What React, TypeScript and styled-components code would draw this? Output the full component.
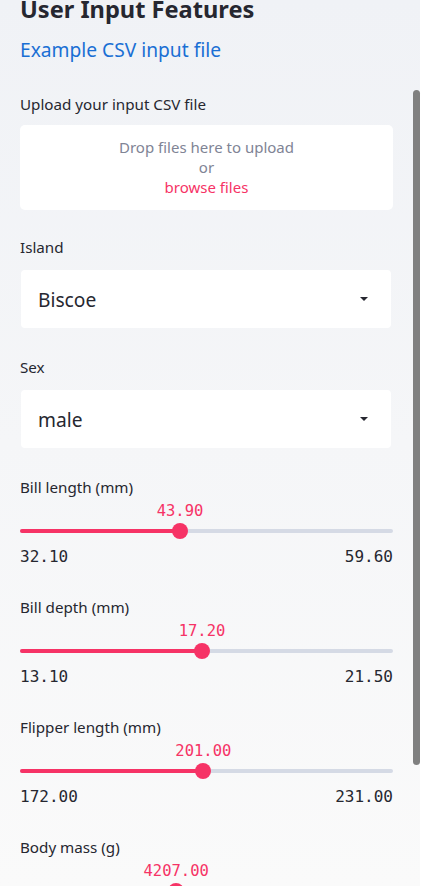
import React, { useLayoutEffect, useRef } from "react";
import styled, { createGlobalStyle } from "styled-components";

const GlobalStyle = createGlobalStyle`
  html, body { margin: 0; padding: 0; background: #ffffff; }
  body { font-family: "Noto Sans", "Open Sans", sans-serif; color: #262730; }
  * { box-sizing: border-box; }
`;

const Page = styled.div`
  position: relative;
  display: flex;
  width: 432px;
  height: 886px;
  background: #ffffff;
`;

const Sidebar = styled.aside`
  width: 420px;
  height: 886px;
  flex: none;
  overflow: hidden;
  background-image: linear-gradient(180deg, #f0f2f6 0%, #fafafa 100%);
`;

const ScrollThumb = styled.div`
  position: absolute;
  left: 413px;
  top: 90px;
  width: 7px;
  height: 675px;
  border-radius: 4px;
  background: #808080;
`;

const Content = styled.div`
  display: flex;
  flex-direction: column;
  padding: 112px 27px 118px 20px;
`;

const Title = styled.h2`
  margin: 0;
  font-size: 23.6px;
  line-height: 30px;
  font-weight: 700;
  color: #262730;
`;

const CsvLink = styled.a`
  margin-top: 13px;
  font-size: 19.2px;
  line-height: 26px;
  color: #1a6fd4;
  text-decoration: none;
`;

const Label = styled.div<{ $gap: number }>`
  margin-top: ${(p) => p.$gap}px;
  font-size: 15.2px;
  line-height: 20px;
  color: #262730;
`;

const Dropzone = styled.div`
  margin-top: 11px;
  height: 85px;
  background: #ffffff;
  border-radius: 5px;
  padding-top: 12px;
  display: flex;
  flex-direction: column;
  align-items: center;
  font-size: 15px;
  line-height: 20px;
  color: #808495;
`;

const Browse = styled.span`
  color: #f63366;
`;

const SelectBox = styled.div`
  margin: 13px 2px 0 1px;
  height: 58px;
  background: #ffffff;
  border-radius: 4px;
  display: flex;
  align-items: center;
  justify-content: space-between;
  padding: 0 23px 0 17px;
  font-size: 19.2px;
  color: #262730;
`;

const Caret = styled.span`
  width: 0;
  height: 0;
  border-left: 4px solid transparent;
  border-right: 4px solid transparent;
  border-top: 4px solid #262730;
`;

const Mono = styled.div`
  font-family: "DejaVu Sans Mono", "Liberation Mono", monospace;
`;

const ValueRow = styled(Mono)`
  margin-top: 4px;
  position: relative;
  height: 20px;
  font-size: 15.5px;
  line-height: 20px;
  color: #f63366;
`;

const ValueText = styled.span`
  position: absolute;
  top: 0;
  transform: translateX(-50%);
  white-space: nowrap;
`;

const TrackArea = styled.div`
  height: 20px;
  display: flex;
  align-items: center;
  position: relative;
`;

const Track = styled.div`
  width: 100%;
  height: 4px;
  border-radius: 2px;
  background: #d5dae5;
  display: flex;
`;

const Fill = styled.div`
  height: 4px;
  border-radius: 2px;
  background: #f63366;
`;

const Thumb = styled.div`
  position: absolute;
  top: 2px;
  width: 16px;
  height: 16px;
  border-radius: 50%;
  background: #f63366;
  transform: translateX(-50%);
`;

const MinMax = styled(Mono)`
  margin-top: 6px;
  display: flex;
  justify-content: space-between;
  font-size: 16px;
  line-height: 20px;
  color: #262730;
`;

type SliderProps = { label: string; min: number; max: number; value: number; first?: boolean };

const Slider = ({ label, min, max, value, first }: SliderProps) => {
  const pct = ((value - min) / (max - min)) * 100;
  return (
    <>
      <Label $gap={first ? 29 : 30}>{label}</Label>
      <ValueRow>
        <ValueText style={{ left: `${pct}%` }}>{value.toFixed(2)}</ValueText>
      </ValueRow>
      <TrackArea>
        <Track>
          <Fill style={{ width: `${pct}%` }} />
        </Track>
        <Thumb style={{ left: `${pct}%` }} />
      </TrackArea>
      <MinMax>
        <span>{min.toFixed(2)}</span>
        <span>{max.toFixed(2)}</span>
      </MinMax>
    </>
  );
};

export default function App() {
  const ref = useRef<HTMLElement>(null);
  useLayoutEffect(() => {
    if (ref.current) ref.current.scrollTop = 118;
  }, []);
  return (
    <Page>
      <GlobalStyle />
      <Sidebar ref={ref}>
        <Content>
          <Title>User Input Features</Title>
          <CsvLink href="#">Example CSV input file</CsvLink>
          <Label $gap={31}>Upload your input CSV file</Label>
          <Dropzone>
            <span>Drop files here to upload</span>
            <span>or</span>
            <Browse>browse files</Browse>
          </Dropzone>
          <Label $gap={27}>Island</Label>
          <SelectBox>
            <span>Biscoe</span>
            <Caret />
          </SelectBox>
          <Label $gap={29}>Sex</Label>
          <SelectBox>
            <span>male</span>
            <Caret />
          </SelectBox>
          <Slider first label="Bill length (mm)" min={32.1} max={59.6} value={43.9} />
          <Slider label="Bill depth (mm)" min={13.1} max={21.5} value={17.2} />
          <Slider label="Flipper length (mm)" min={172} max={231} value={201} />
          <Slider label="Body mass (g)" min={2700} max={6300} value={4207} />
        </Content>
      </Sidebar>
      <ScrollThumb />
    </Page>
  );
}
